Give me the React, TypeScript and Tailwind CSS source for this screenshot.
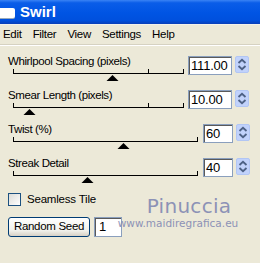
const FONT = "font-['Liberation_Sans',Arial,sans-serif]";

type SliderProps = {
  width: number;
  end: number;
  ticks: number[];
  thumb: number;
};

const Slider = ({ width, end, ticks, thumb }: SliderProps) => (
  <svg width={width} height={13} className="block" shapeRendering="crispEdges">
    <line x1={5} y1={5.5} x2={end + 1} y2={5.5} stroke="#000" />
    {[5, ...ticks, end].map((t) => (
      <line key={t} x1={t + 0.5} y1={1} x2={t + 0.5} y2={6} stroke="#000" />
    ))}
    <polygon
      points={`${thumb - 5.5},13 ${thumb + 0.5},7 ${thumb + 6.5},13`}
      fill="#000"
      shapeRendering="auto"
    />
  </svg>
);

const Spinner = () => (
  <div className="w-[14px] h-[17px] rounded-[2px] bg-[#c1d2fb] border border-[#b2c6f4]">
    <svg width={12} height={15} className="block">
      <path d="M2.5 6 L6 2.8 L9.5 6" fill="none" stroke="#4d6185" strokeWidth={1.8} />
      <path d="M2.5 9 L6 12.2 L9.5 9" fill="none" stroke="#4d6185" strokeWidth={1.8} />
    </svg>
  </div>
);

const SpinBox = ({ value, width }: { value: string; width: string }) => (
  <div className="flex items-start gap-[3px] mt-[2px]">
    <div
      className={`${width} h-[19px] bg-white border border-[#8a9fbd] shadow-[inset_1px_1px_0_#5a5a5a] pl-[2px] text-[13px] leading-[17px] tracking-[-0.2px]`}
    >
      {value}
    </div>
    <Spinner />
  </div>
);

type RowProps = {
  label: string;
  value: string;
  wide: boolean;
  thumb: number;
};

const SliderRow = ({ label, value, wide, thumb }: RowProps) => (
  <div className="flex h-[34px]">
    <div className={wide ? "w-[195px]" : "w-[180px]"}>
      <div className="h-[14px] leading-[15px] text-[11.5px] tracking-[-0.4px]">{label}</div>
      {wide ? (
        <Slider width={195} end={189} ticks={[]} thumb={thumb} />
      ) : (
        <Slider width={180} end={175} ticks={[140]} thumb={thumb} />
      )}
    </div>
    <SpinBox value={value} width={wide ? "w-[30px]" : "w-[44px]"} />
  </div>
);

export default function App() {
  const menu = ["Edit", "Filter", "View", "Settings", "Help"];

  return (
    <div
      className={`relative w-[260px] h-[263px] overflow-hidden bg-[#ece9d8] text-black text-[11px] tracking-[-0.3px] ${FONT}`}
    >
      {/* title bar */}
      <div className="h-[24px] flex items-center bg-[linear-gradient(to_bottom,#3a83f5_0%,#0a5de8_12%,#0054e3_55%,#0050dd_85%,#0a3fb8_100%)]">
        <div className="w-[15px] h-[10px] mt-[1px] bg-white rounded-r-[2px] shadow-[0_1px_0_#9ab]" />
        <span className="ml-[5px] text-white font-bold text-[15px] tracking-normal">Swirl</span>
      </div>

      {/* menu bar */}
      <div className="h-[20px] flex items-center gap-[11px] pl-[3px] border-t border-[#f4f2ea] text-[11.5px]">
        {menu.map((m) => (
          <span key={m}>{m}</span>
        ))}
      </div>
      <div className="h-[2px] border-t border-[#d6d2c2] border-b border-b-white" />

      <div className="pl-2 pt-[8px]">
        <SliderRow label="Whirlpool Spacing (pixels)" value="111.00" wide={false} thumb={104} />
        <SliderRow label="Smear Length (pixels)" value="10.00" wide={false} thumb={21} />
        <SliderRow label="Twist (%)" value="60" wide thumb={115} />
        <SliderRow label="Streak Detail" value="40" wide thumb={79} />

        <div className="flex items-center gap-[6px] mt-[3px] h-[13px]">
          <div className="w-[13px] h-[13px] border border-[#1c5180] bg-[linear-gradient(135deg,#dcdcd7,#ffffff)]" />
          <span className="text-[11.5px] tracking-[-0.2px]">Seamless Tile</span>
        </div>

        <div className="flex items-center gap-[4px] mt-[11px]">
          <button className="w-[82px] h-[20px] rounded-[3px] border border-[#003c74] bg-[linear-gradient(to_bottom,#ffffff,#f0f0ea_70%,#d6d0c5)] text-[11.5px] leading-none tracking-[-0.3px]">
            Random Seed
          </button>
          <div className="w-[28px] h-[20px] bg-white border border-[#8a9fbd] shadow-[inset_1px_1px_0_#5a5a5a] pl-[4px] text-[13px] leading-[18px]">
            1
          </div>
        </div>
      </div>

      {/* watermark */}
      <div className="absolute left-[112px] top-[195px] w-[132px] text-center text-[#8c92b6] font-['DejaVu_Sans',sans-serif] tracking-normal">
        <div className="text-[20px] leading-[22px] pl-[22px] tracking-[0.3px]">Pinuccia</div>
        <div className="text-[10.5px] leading-[12px]">www.maidiregrafica.eu</div>
      </div>
    </div>
  );
}
